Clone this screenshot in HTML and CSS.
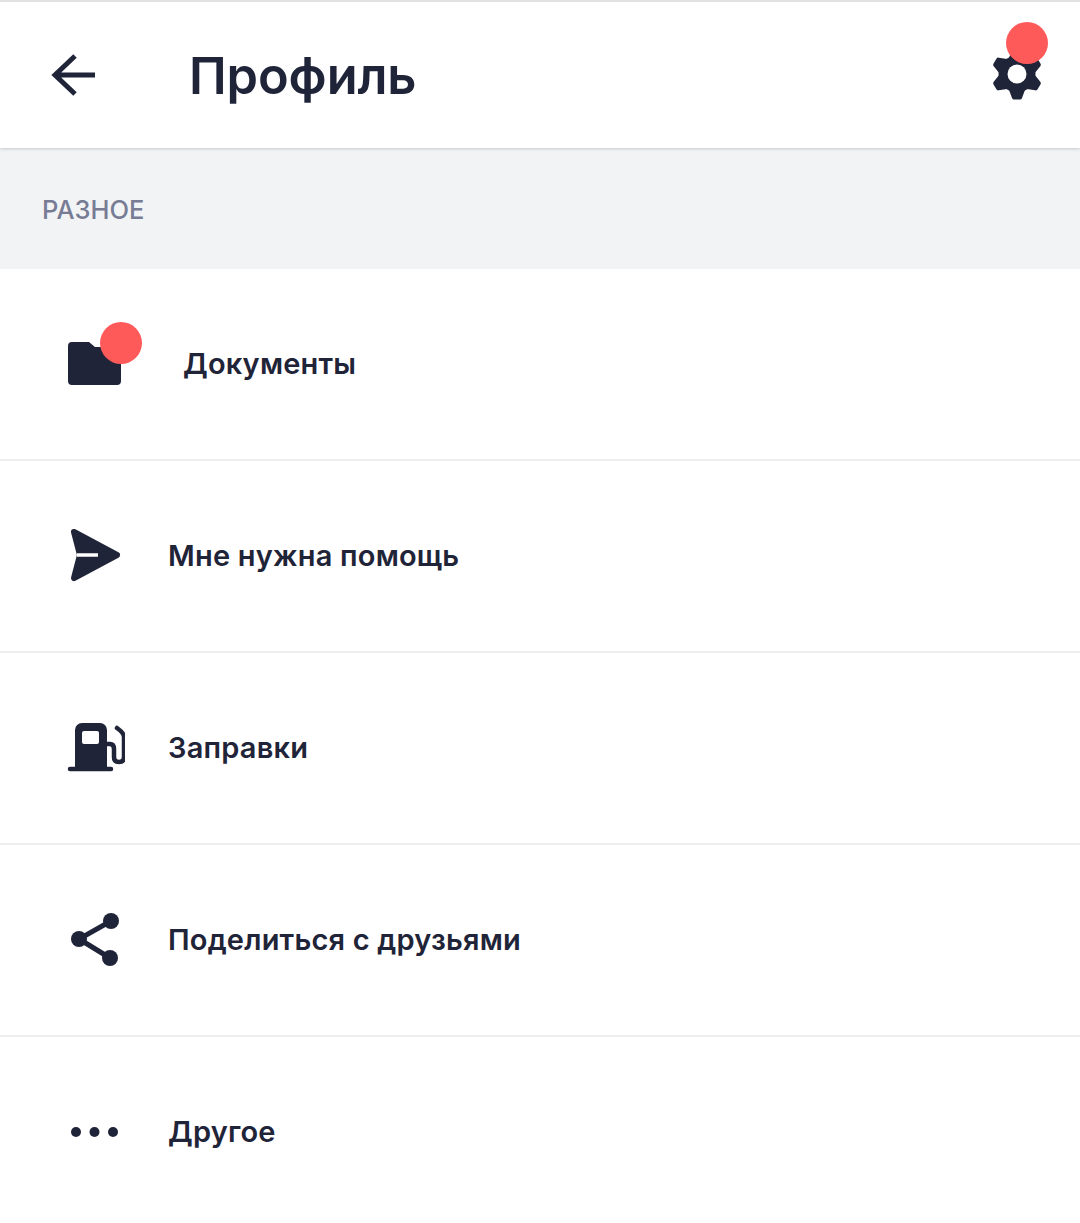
FILE: index.html
```html
<!DOCTYPE html>
<html>
<head>
    <title>Профиль</title>
    <link rel="stylesheet" href="styles.css">
</head>
<body>

<!-- Header -->
<div class="header">
    <svg class="back-icon" viewBox="0 0 60 60">
        <path d="M31 11 L11 30 L31 49 M11 30 H51"/>
    </svg>
    <h1 class="title">Профиль</h1>
    <div class="settings">
        <svg class="gear-icon" viewBox="-30 -30 60 60">
            <defs>
                <path id="tooth" d="M-8 -16 L-5 -24 Q-4.500 -25.500 -3 -25.500 H3 Q4.500 -25.500 5 -24 L8 -16 Z"/>
            </defs>
            <circle r="18.500"/>
            <use href="#tooth"/>
            <use href="#tooth" transform="rotate(60)"/>
            <use href="#tooth" transform="rotate(120)"/>
            <use href="#tooth" transform="rotate(180)"/>
            <use href="#tooth" transform="rotate(240)"/>
            <use href="#tooth" transform="rotate(300)"/>
            <circle class="gear-hole" r="9.500"/>
        </svg>
        <span class="badge badge-gear"></span>
    </div>
</div>

<!-- Section title -->
<div class="section-title">РАЗНОЕ</div>

<!-- Menu -->
<div class="menu">
    <div class="menu-item">
        <div class="icon-box">
            <svg class="icon" viewBox="0 0 60 60">
                <path d="M3 12 a4 4 0 0 1 4 -4 H24 L30 13 H52 a4 4 0 0 1 4 4 V47 a4 4 0 0 1 -4 4 H7 a4 4 0 0 1 -4 -4 Z"/>
            </svg>
            <span class="badge badge-folder"></span>
        </div>
        <span class="label label-docs">Документы</span>
    </div>
    <div class="menu-item">
        <div class="icon-box">
            <svg class="icon" viewBox="0 0 60 60">
                <path class="send" d="M9 6 L52 29 L9 52 L15 29 Z"/>
                <path class="send-line" d="M12 29 H33"/>
            </svg>
        </div>
        <span class="label">Мне нужна помощь</span>
    </div>
    <div class="menu-item">
        <div class="icon-box">
            <svg class="icon" viewBox="0 0 60 60">
                <path d="M10 12 a7 7 0 0 1 7 -7 H35 a7 7 0 0 1 7 7 V50 H10 Z M19 13 a2 2 0 0 0 -2 2 V24 a2 2 0 0 0 2 2 H32 a2 2 0 0 0 2 -2 V15 a2 2 0 0 0 -2 -2 Z" fill-rule="evenodd"/>
                <path class="fuel-line" d="M5 51 H46"/>
                <path class="fuel-hose" d="M42 26 H45 Q49 26 49 31 V39 Q49 44 54 44 Q59 44 59 39 V19 Q59 15 52 10"/>
            </svg>
        </div>
        <span class="label">Заправки</span>
    </div>
    <div class="menu-item">
        <div class="icon-box">
            <svg class="icon" viewBox="0 0 60 60">
                <path class="share-line" d="M46 11 L14 29 L45 48"/>
                <circle cx="46" cy="11" r="8"/>
                <circle cx="14" cy="29" r="8"/>
                <circle cx="45" cy="48" r="8"/>
            </svg>
        </div>
        <span class="label">Поделиться с друзьями</span>
    </div>
    <div class="menu-item">
        <div class="icon-box">
            <svg class="icon" viewBox="0 0 60 60">
                <circle cx="11" cy="30" r="5"/>
                <circle cx="29.500" cy="30" r="5"/>
                <circle cx="48" cy="30" r="5"/>
            </svg>
        </div>
        <span class="label">Другое</span>
    </div>
</div>

</body>
</html>
```

FILE: styles.css
```css
body {
    margin: 0;
    background-color: #fff;
    font-family: Inter, "Noto Sans", sans-serif;
    color: #1f2438;
}

svg {
    display: block;
    fill: #1f2438;
}

/* Header */
.header {
    height: 146px;
    border-top: 2px solid #e2e2e2;
    display: flex;
    align-items: center;
    padding-left: 44px;
    position: relative;
    z-index: 1;
    background-color: #fff;
    box-shadow: 0 1px 3px rgba(0, 0, 0, 0.18);
}
.back-icon {
    width: 60px;
    height: 60px;
}
.back-icon path {
    fill: none;
    stroke: #1f2438;
    stroke-width: 5;
}
.title {
    margin: 1px 0 0 85px;
    font-size: 50.500px;
    font-weight: 600;
    letter-spacing: -0.1px;
}
.settings {
    margin-left: auto;
    margin-right: 33px;
    margin-top: -2px;
    position: relative;
}
.gear-icon {
    width: 60px;
    height: 60px;
}
.gear-hole {
    fill: #fff;
}

/* Badges */
.badge {
    position: absolute;
    width: 42px;
    height: 42px;
    border-radius: 50%;
    background-color: #ff5a5a;
}
.badge-gear {
    top: -22px;
    left: 19px;
}
.badge-folder {
    top: -12px;
    left: 35px;
}

/* Section title */
.section-title {
    height: 119px;
    padding: 2px 0 0 42px;
    display: flex;
    align-items: center;
    background-color: #f2f3f5;
    font-size: 25.500px;
    font-weight: 500;
    color: #777c94;
}

/* Menu */
.menu-item {
    height: 190px;
    display: flex;
    align-items: center;
    padding-left: 65px;
    border-bottom: 2px solid #eeeeee;
}
.menu-item:last-child {
    border-bottom: none;
}
.icon-box {
    width: 60px;
    height: 60px;
    position: relative;
}
.icon {
    width: 60px;
    height: 60px;
}
.label {
    margin: 0 0 2px 43px;
    font-size: 29px;
    font-weight: 600;
    letter-spacing: 0.2px;
}
.label-docs {
    margin-left: 58px;
}

/* Icon strokes */
.send {
    stroke: #1f2438;
    stroke-width: 6;
    stroke-linejoin: round;
}
.send-line {
    stroke: #fff;
    stroke-width: 3.500;
}
.fuel-line {
    stroke: #1f2438;
    stroke-width: 4.500;
    stroke-linecap: round;
}
.fuel-hose {
    fill: none;
    stroke: #1f2438;
    stroke-width: 4.500;
    stroke-linecap: round;
}
.share-line {
    fill: none;
    stroke: #1f2438;
    stroke-width: 5;
}
```
